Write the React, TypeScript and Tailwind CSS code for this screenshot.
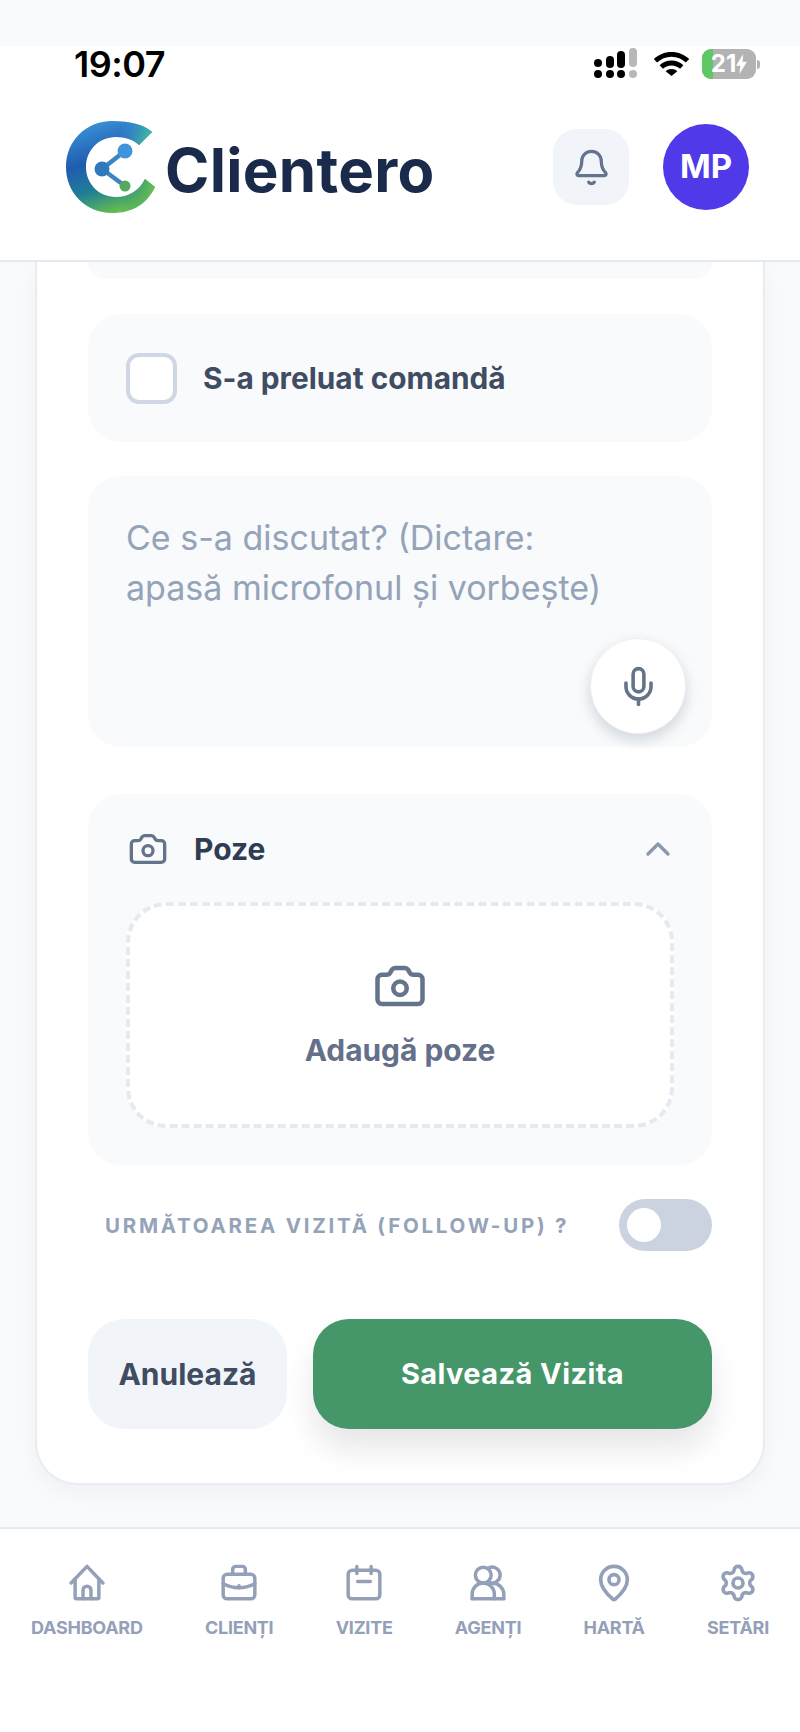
import { Bell, Camera, ChevronUp, MapPin, Mic, Settings } from "lucide-react";

const navStroke = { fill: "none", stroke: "currentColor", strokeWidth: 2.2, strokeLinecap: "round", strokeLinejoin: "round" } as const;

const HomeIcon = () => (
  <svg viewBox="0 0 24 24" className="size-[38px]" {...navStroke}>
    <path d="M2 12 12 1.500 22 12" />
    <path d="M4.500 9.500V21a1 1 0 0 0 1 1h13a1 1 0 0 0 1-1V9.500" />
    <path d="M9.500 22V16.500a2.500 2.500 0 0 1 5 0V22" />
  </svg>
);

const BriefcaseIcon = () => (
  <svg viewBox="0 0 24 24" className="size-[38px]" {...navStroke}>
    <rect x="2" y="6.500" width="20" height="15.500" rx="2.500" />
    <path d="M8 6.500V3.500a2 2 0 0 1 2-2h4a2 2 0 0 1 2 2v3" />
    <path d="M2 12.500c5.800 3.300 14.200 3.300 20 0" />
    <path d="M12 13.800v1.200" />
  </svg>
);

const CalendarIcon = () => (
  <svg viewBox="0 0 24 24" className="size-[38px]" {...navStroke}>
    <rect x="2" y="4" width="20" height="18" rx="2.500" />
    <path d="M7.500 1.500v4.500M16.500 1.500v4.500" />
    <path d="M8 11h8" />
  </svg>
);

const UsersIcon = () => (
  <svg viewBox="0 0 24 24" className="size-[38px]" {...navStroke}>
    <circle cx="9" cy="7" r="5" />
    <path d="M12.500 2.500a5 5 0 1 1 0 9" />
    <path d="M2 22v-3a7 7 0 0 1 14 0v3" />
    <path d="M15 12.200a7 7 0 0 1 7 6.800v3" />
    <path d="M2 22h20" />
  </svg>
);

const navItems = [
  { label: "DASHBOARD", icon: <HomeIcon /> },
  { label: "CLIENȚI", icon: <BriefcaseIcon /> },
  { label: "VIZITE", icon: <CalendarIcon /> },
  { label: "AGENȚI", icon: <UsersIcon /> },
  { label: "HARTĂ", icon: <MapPin className="size-[40px]" strokeWidth={2.2} /> },
  { label: "SETĂRI", icon: <Settings className="size-[40px]" strokeWidth={2.2} /> },
];

const LogoMark = () => (
  <svg viewBox="0 0 90 92" className="h-[92px] w-[90px] shrink-0">
    <defs>
      <linearGradient id="arc" x1="0.300" y1="0" x2="0.600" y2="1">
        <stop offset="0" stopColor="#3a93d6" />
        <stop offset="0.400" stopColor="#1f5cb0" />
        <stop offset="0.700" stopColor="#1f7f94" />
        <stop offset="1" stopColor="#6cc24a" />
      </linearGradient>
      <linearGradient id="tip" x1="0.300" y1="0" x2="1" y2="0.200">
        <stop offset="0" stopColor="#3a93d6" stopOpacity="0" />
        <stop offset="1" stopColor="#3fb5a0" />
      </linearGradient>
      <linearGradient id="tail" x1="0.200" y1="0.500" x2="1" y2="0.500">
        <stop offset="0" stopColor="#2f9a78" stopOpacity="0" />
        <stop offset="1" stopColor="#6cc24a" />
      </linearGradient>
    </defs>
    <path
      d="M86 11C78 4 66 0 46 0 20 0 0 20 0 46 0 72 20 92 46 92 66 92 80 84 89 66L79 58C73 70 62 76 50 76 32 76 20 62 20 46 20 30 32 16 50 16 60 16 68 19 73 24Z"
      fill="url(#arc)"
    />
    <path d="M86 11C78 4 66 0 46 0L48 16C60 16 68 19 73 24Z" fill="url(#tip)" />
    <path d="M89 66C80 84 66 92 46 92L50 76C62 76 73 70 79 58Z" fill="url(#tail)" />
    <path d="M59 30 36 48 59 65" fill="none" stroke="#3a86c4" strokeWidth="4.500" />
    <circle cx="59" cy="30" r="7.500" fill="#3f94dc" />
    <circle cx="36" cy="48" r="7.500" fill="#2f78bb" />
    <circle cx="59" cy="65" r="5.500" fill="#55a95c" />
  </svg>
);

const SignalDots = () => (
  <svg viewBox="0 0 46 32" className="h-[32px] w-[46px]">
    <circle cx="5" cy="26" r="4" fill="#000" />
    <circle cx="5" cy="15" r="4" fill="#000" />
    <circle cx="17" cy="26" r="4" fill="#000" />
    <rect x="13" y="8" width="8" height="12" rx="4" fill="#000" />
    <circle cx="28" cy="26" r="4" fill="#000" />
    <rect x="24" y="3" width="8" height="17" rx="4" fill="#000" />
    <circle cx="40" cy="26" r="4" fill="#b8b8b8" />
    <rect x="36" y="0" width="8" height="19" rx="4" fill="#b8b8b8" />
  </svg>
);

const WifiIcon = () => (
  <svg viewBox="0 0 37 24" className="h-[24px] w-[37px]">
    <path d="M18.500 0C11.500 0 5.300 2.700.8 7.100l3.300 3.500C7.800 7 12.900 4.800 18.500 4.800s10.700 2.200 14.400 5.800l3.300-3.500C31.700 2.700 25.500 0 18.500 0Z" fill="#000" />
    <path d="M18.500 8.500c-4.700 0-8.800 1.800-11.900 4.800l3.300 3.500c2.200-2.100 5.200-3.400 8.600-3.400s6.400 1.300 8.600 3.400l3.300-3.500c-3.100-3-7.200-4.800-11.900-4.800Z" fill="#000" />
    <path d="M18.500 17c-2.300 0-4.300.9-5.800 2.300l5.800 4.700 5.800-4.700C22.800 17.900 20.800 17 18.500 17Z" fill="#000" />
  </svg>
);

const Battery = () => (
  <div className="flex items-center gap-[1px]">
    <div className="relative flex h-[30px] w-[54px] items-center justify-center overflow-hidden rounded-[9px] bg-[#b3b3b3]">
      <div className="absolute inset-y-0 left-0 w-[11px] bg-[#5fc766]" />
      <span className="relative text-[24px] leading-none font-bold text-white">21</span>
      <svg viewBox="0 0 10 18" className="relative h-[20px] w-[11px]">
        <path d="M6.500 0 0 10.500h4L3 18l7-11H6Z" fill="#fff" />
      </svg>
    </div>
    <div className="h-[9px] w-[3px] rounded-r-full bg-[#b3b3b3]" />
  </div>
);

export default function App() {
  return (
    <div className="flex h-[1732px] w-[800px] flex-col overflow-hidden bg-white font-['Inter',sans-serif]">
      <div className="h-[46px] bg-[#f8fafc]" />

      <header className="h-[216px] border-b-2 border-[#e5e9f0] bg-white">
        <div className="flex h-[36px] items-center justify-between pr-[40px] pl-[74px]">
          <span className="text-[36px] leading-none font-semibold tracking-[-0.5px] text-black">19:07</span>
          <div className="flex items-center gap-[17px]">
            <SignalDots />
            <div className="-ml-[3px] flex items-center gap-[12px]">
              <WifiIcon />
              <Battery />
            </div>
          </div>
        </div>
        <div className="flex h-[170px] items-center justify-between pr-[51px] pl-[66px]">
          <div className="flex items-center gap-[9px]">
            <LogoMark />
            <span className="mt-[5px] text-[60px] leading-none font-bold tracking-[0.300px] text-[#1a2a4a]">Clientero</span>
          </div>
          <div className="flex items-center gap-[34px]">
            <button className="flex size-[76px] items-center justify-center rounded-[24px] bg-[#f1f5f9] text-[#64748b]">
              <Bell className="size-[39px]" strokeWidth={2} />
            </button>
            <div className="flex size-[86px] items-center justify-center rounded-full bg-[#4f39e8] text-[33px] font-bold text-white">
              MP
            </div>
          </div>
        </div>
      </header>

      <main className="flex-1 overflow-hidden bg-[#f8fafc] px-[35px]">
        <div className="rounded-b-[42px] border-x-2 border-b-2 border-[#e9edf2] bg-white px-[51px] pb-[54px] shadow-[0_8px_20px_rgba(15,23,42,0.04)]">
          <div className="h-[17px] rounded-b-[32px] bg-[#f8fafc]" />

          <label className="mt-[35px] flex h-[128px] items-center gap-[26px] rounded-[33px] bg-[#f8fafc] pl-[38px]">
            <span className="size-[51px] rounded-[13px] border-[4px] border-[#d0d7e4] bg-white" />
            <span className="text-[29.800px] font-bold text-[#3f4c62]">S-a preluat comandă</span>
          </label>

          <div className="relative mt-[34px] h-[271px] rounded-[33px] bg-[#f8fafc] pt-[37px] pl-[38px]">
            <p className="w-[490px] text-[34px] leading-[50px] text-[#94a3b8]">
              Ce s-a discutat? (Dictare: apasă microfonul și vorbește)
            </p>
            <button className="absolute right-[26px] bottom-[13px] flex size-[96px] items-center justify-center rounded-full border border-[#eef1f5] bg-white text-[#64748b] shadow-[0_6px_14px_rgba(15,23,42,0.16)]">
              <Mic className="size-[43px]" strokeWidth={2} />
            </button>
          </div>

          <section className="mt-[47px] h-[371px] rounded-[33px] bg-[#f8fafc] pt-[32px] pr-[38px] pl-[38px]">
            <div className="-mr-[4px] flex h-[46px] items-center justify-between pl-[2px]">
              <div className="flex items-center gap-[26px]">
                <Camera className="size-[40px] text-[#64748b]" strokeWidth={2} />
                <span className="text-[30px] font-bold text-[#2f3c52]">Poze</span>
              </div>
              <ChevronUp className="size-[40px] text-[#8a97ad]" strokeWidth={2} />
            </div>
            <div className="mt-[30px] flex h-[226px] flex-col items-center rounded-[40px] border-[4px] border-dashed border-[#e5e9f0] bg-white pt-[53px]">
              <Camera className="size-[54px] text-[#64748b]" strokeWidth={2} />
              <span className="mt-[15px] text-[29.900px] font-bold text-[#64708a]">Adaugă poze</span>
            </div>
          </section>

          <div className="mt-[34px] flex h-[52px] items-center justify-between pl-[17px]">
            <span className="mt-[2px] text-[20.500px] font-bold tracking-[2.750px] text-[#94a3b8]">URMĂTOAREA VIZITĂ (FOLLOW-UP) ?</span>
            <div className="flex h-[52px] w-[93px] items-center rounded-full bg-[#cbd3e1] pl-[8px]">
              <div className="size-[34px] rounded-full bg-white" />
            </div>
          </div>

          <div className="mt-[68px] flex h-[110px] gap-[26px]">
            <button className="w-[199px] rounded-[36px] bg-[#f1f5f9] text-[30px] font-bold text-[#3f4c62]">Anulează</button>
            <button className="flex-1 rounded-[36px] bg-[#459669] text-[29px] font-bold tracking-[0.400px] text-white shadow-[0_20px_30px_rgba(15,23,42,0.1)]">
              Salvează Vizita
            </button>
          </div>
        </div>
      </main>

      <nav className="flex h-[205px] justify-between border-t-2 border-[#e5e9f0] bg-white px-[31px] pt-[35px] text-[#94a0b8]">
        {navItems.map((item) => (
          <div key={item.label} className="flex flex-col items-center">
            <div className="flex h-[38px] items-center">{item.icon}</div>
            <span className="mt-[14px] text-[18px] leading-[24px] font-bold tracking-[-0.250px]">{item.label}</span>
          </div>
        ))}
      </nav>
    </div>
  );
}
